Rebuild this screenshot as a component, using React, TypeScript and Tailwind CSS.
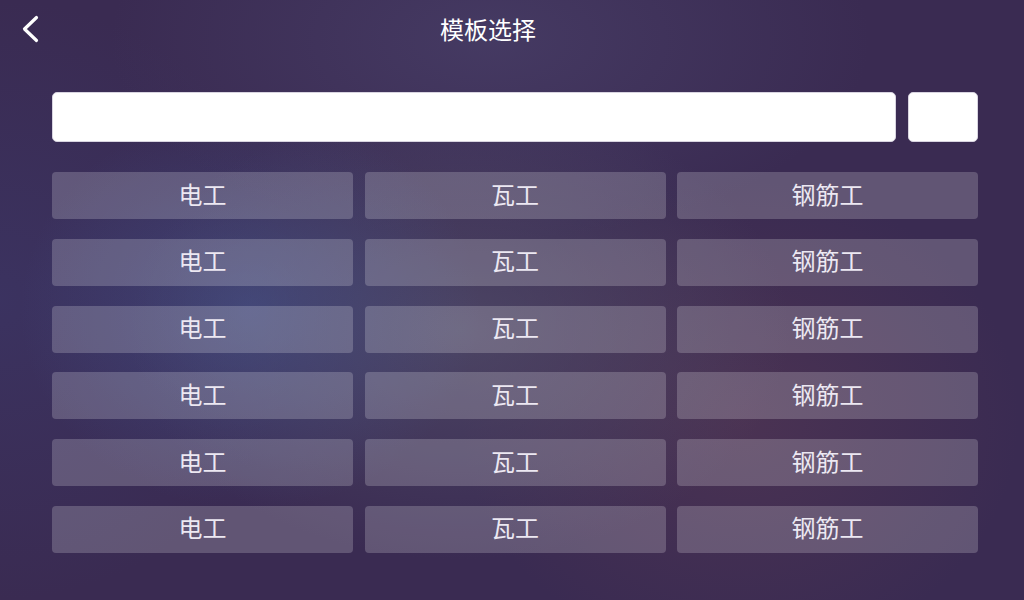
import React from "react";

const rows = Array.from({ length: 6 });
const labels = ["电工", "瓦工", "钢筋工"];

export default function App() {
  return (
    <div
      className="w-[1024px] h-[600px] overflow-hidden bg-[#3a2b52] bg-[radial-gradient(ellipse_230px_200px_at_250px_310px,rgba(70,90,150,0.5),transparent),radial-gradient(ellipse_330px_230px_at_460px_330px,rgba(88,86,112,0.6),transparent),radial-gradient(ellipse_280px_240px_at_740px_420px,rgba(100,62,84,0.4),transparent),radial-gradient(ellipse_380px_200px_at_490px_40px,rgba(78,70,112,0.55),transparent),radial-gradient(ellipse_300px_300px_at_0px_300px,rgba(60,58,110,0.5),transparent)]"
      style={{ fontFamily: '"Noto Sans CJK SC", "Noto Sans", sans-serif' }}
    >
      <div className="grid grid-cols-[60px_1fr_108px] h-[60px] items-center">
        <div className="flex items-center justify-center">
          <svg width="60" height="60" viewBox="0 0 60 60" className="block">
            <polyline
              points="36.5,17.5 24.5,29 36.5,40.5"
              fill="none"
              stroke="#ffffff"
              strokeWidth="3.2"
              strokeLinecap="round"
              strokeLinejoin="round"
            />
          </svg>
        </div>
        <div className="text-center text-white text-[24px] leading-none pb-[3px]">模板选择</div>
        <div />
      </div>
      <div className="pl-[52px] pr-[46px] pt-[32px]">
        <div className="flex gap-[12px] h-[50px]">
          <div className="flex-1 bg-white rounded-[5px] border border-[#d8d4e0]" />
          <div className="w-[70px] bg-white rounded-[5px] border border-[#d8d4e0]" />
        </div>
        <div className="grid grid-cols-3 gap-x-[11.5px] gap-y-[19.8px] mt-[30px]">
          {rows.map((_, r) =>
            labels.map((l) => (
              <div
                key={r + l}
                className="h-[47px] rounded-[4px] bg-[rgba(255,255,255,0.2)] flex items-center justify-center text-[#ece8f2] text-[24px] leading-none pb-[4px]"
              >
                {l}
              </div>
            ))
          )}
        </div>
      </div>
    </div>
  );
}
